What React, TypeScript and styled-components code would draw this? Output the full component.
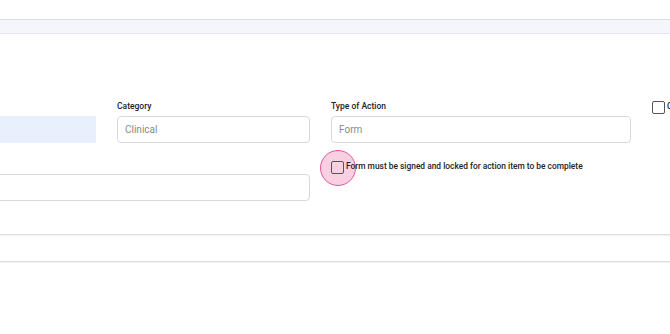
import styled, { createGlobalStyle } from "styled-components";

const GlobalStyle = createGlobalStyle`
  html, body {
    margin: 0;
    padding: 0;
    background: #ffffff;
    font-family: Roboto, "Liberation Sans", sans-serif;
    overflow: hidden;
  }
`;

const Page = styled.div`
  width: 670px;
  height: 334px;
  overflow: hidden;
  padding-top: 19px;
  box-sizing: border-box;
`;

const TopBar = styled.div`
  height: 13px;
  background: #f5f6fb;
  border-top: 1px solid #dcdde3;
  border-bottom: 1px solid #e3e5ec;
`;

const FormGrid = styled.div`
  display: grid;
  grid-template-columns: 193px 193px 300px 40px;
  column-gap: 21px;
  row-gap: 31px;
  margin-left: -97px;
  padding-top: 66px;
  width: max-content;
`;

const Field = styled.div<{ $span?: number }>`
  display: flex;
  flex-direction: column;
  gap: 5px;
  grid-column: span ${(p) => p.$span ?? 1};
`;

const Label = styled.label`
  font-size: 8.5px;
  font-weight: 500;
  color: #222;
  line-height: 10px;
  height: 10px;
  padding-top: 1px;
`;

const Input = styled.div<{ $filled?: boolean }>`
  height: 27px;
  box-sizing: border-box;
  border: 1px solid ${(p) => (p.$filled ? "transparent" : "#d9d9dc")};
  border-radius: ${(p) => (p.$filled ? "0" : "4px")};
  background: ${(p) => (p.$filled ? "#e8f0fe" : "#fff")};
  padding: 0 7px;
  display: flex;
  align-items: center;
  font-size: 10px;
  color: #8a8a8a;
`;

const CheckRow = styled.div<{ $shift?: number }>`
  display: flex;
  align-items: flex-start;
  gap: 2px;
  margin-top: ${(p) => p.$shift ?? 0}px;
  position: relative;
`;

const Box = styled.span`
  width: 13px;
  height: 13px;
  box-sizing: border-box;
  border: 1.6px solid #555;
  border-radius: 2px;
  flex-shrink: 0;
  background: transparent;
  position: relative;
  z-index: 1;
`;

const Ripple = styled.span`
  position: absolute;
  left: -11px;
  top: -11px;
  width: 36px;
  height: 36px;
  border-radius: 50%;
  background: rgba(232, 108, 165, 0.32);
  border: 1.5px solid #e0579b;
  box-sizing: border-box;
`;

const CheckText = styled.span`
  font-size: 8.4px;
  font-weight: 500;
  color: #222;
  line-height: 10px;
  white-space: nowrap;
  position: relative;
  z-index: 1;
`;

const Divider = styled.div<{ $top: number }>`
  margin-top: ${(p) => p.$top}px;
  height: 1px;
  background: #dedede;
  border-bottom: 1px solid #f0f0f0;
`;

export default function App() {
  return (
    <Page>
      <GlobalStyle />
      <TopBar />
      <FormGrid>
        <Field>
          <Label />
          <Input $filled />
        </Field>
        <Field>
          <Label>Category</Label>
          <Input>Clinical</Input>
        </Field>
        <Field>
          <Label>Type of Action</Label>
          <Input>Form</Input>
        </Field>
        <CheckRow $shift={1}>
          <Box />
          <CheckText>Complete</CheckText>
        </CheckRow>

        <Field $span={2}>
          <Input />
        </Field>
        <CheckRow $shift={-13}>
          <Ripple />
          <Box />
          <CheckText>Form must be signed and locked for action item to be complete</CheckText>
        </CheckRow>
      </FormGrid>
      <Divider $top={33} />
      <Divider $top={25} />
    </Page>
  );
}
